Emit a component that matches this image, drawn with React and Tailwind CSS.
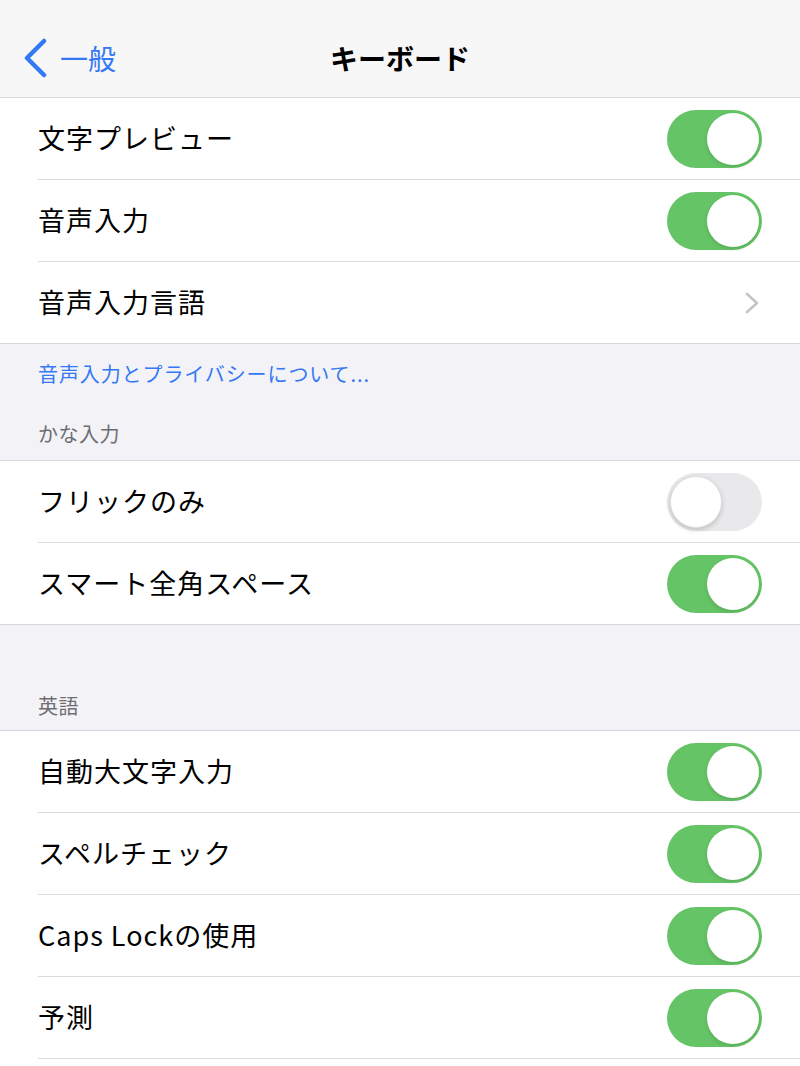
import React from "react";

const font = { fontFamily: '"Noto Sans CJK JP", "Noto Sans", sans-serif' };

const Toggle = ({ on }) =>
    on ? (
        <div className="w-[95px] h-[58px] rounded-full bg-[#65c466] flex items-center justify-end pr-[3px]">
            <div className="w-[52px] h-[52px] rounded-full bg-white shadow-[0_2px_4px_rgba(0,0,0,0.12)]"/>
        </div>
    ) : (
        <div className="w-[95px] h-[58px] rounded-full bg-[#e9e9eb] flex items-center pl-[3px]">
            <div className="w-[52px] h-[52px] rounded-full bg-white shadow-[0_2px_5px_rgba(0,0,0,0.18)] border border-[#e0e0e0]"/>
        </div>
    );

const Chevron = () => (
    <svg width="16" height="22" viewBox="0 0 16 22" className="mr-[2px]">
        <polyline points="3,2 13,11 3,20" fill="none" stroke="#c4c4c7" strokeWidth="2.6"
                  strokeLinecap="round" strokeLinejoin="round"/>
    </svg>
);

const Row = ({ label, on, chevron, last }) => (
    <div className="pl-[38px]">
        <div className={"flex items-center justify-between pr-[38px] " + (last ? "h-[81px]" : "h-[82px] border-b border-[#dcdcdf]")}>
            <span className="text-[27px] text-black tracking-[1px]">{label}</span>
            {chevron ? <Chevron/> : <Toggle on={on}/>}
        </div>
    </div>
);

const Group = ({ children, bottom = true }) => (
    <div className={"bg-white border-t border-[#d6d6da] " + (bottom ? "border-b" : "")}>
        {children}
    </div>
);

export default function App() {
    return (
        <div className="w-[800px] h-[1066px] overflow-hidden bg-white" style={font}>
            <div className="h-[97px] bg-[#f7f7f7] flex items-center relative">
                <div className="flex items-center pl-[22px] pt-[18px]">
                    <svg width="26" height="40" viewBox="0 0 26 40">
                        <polyline points="22,3 5,20 22,37" fill="none" stroke="#3478f6" strokeWidth="4.5"
                                  strokeLinecap="round" strokeLinejoin="round"/>
                    </svg>
                    <span className="ml-[12px] text-[28px] text-[#3478f6]">一般</span>
                </div>
                <div className="absolute inset-x-0 top-[18px] bottom-0 flex items-center justify-center pointer-events-none">
                    <span className="text-[28px] font-bold text-black">キーボード</span>
                </div>
            </div>
            <Group>
                <Row label="文字プレビュー" on/>
                <Row label="音声入力" on/>
                <Row label="音声入力言語" chevron last/>
            </Group>
            <div className="bg-[#f2f2f7] h-[116px] px-[38px] pt-[16px]">
                <div className="text-[20px] leading-[28px] text-[#3478f6] tracking-[0.9px]">音声入力とプライバシーについて...</div>
                <div className="mt-[32px] text-[20px] leading-[28px] text-[#6d6d72] tracking-[0.5px]">かな入力</div>
            </div>
            <Group>
                <Row label="フリックのみ" on={false}/>
                <Row label="スマート全角スペース" on last/>
            </Group>
            <div className="bg-[#f2f2f7] h-[105px] px-[38px] flex items-end pb-[10px]">
                <div className="text-[20px] leading-[28px] text-[#6d6d72] tracking-[0.5px]">英語</div>
            </div>
            <Group bottom={false}>
                <Row label="自動大文字入力" on/>
                <Row label="スペルチェック" on/>
                <Row label="Caps Lockの使用" on/>
                <Row label="予測" on/>
            </Group>
        </div>
    );
}
